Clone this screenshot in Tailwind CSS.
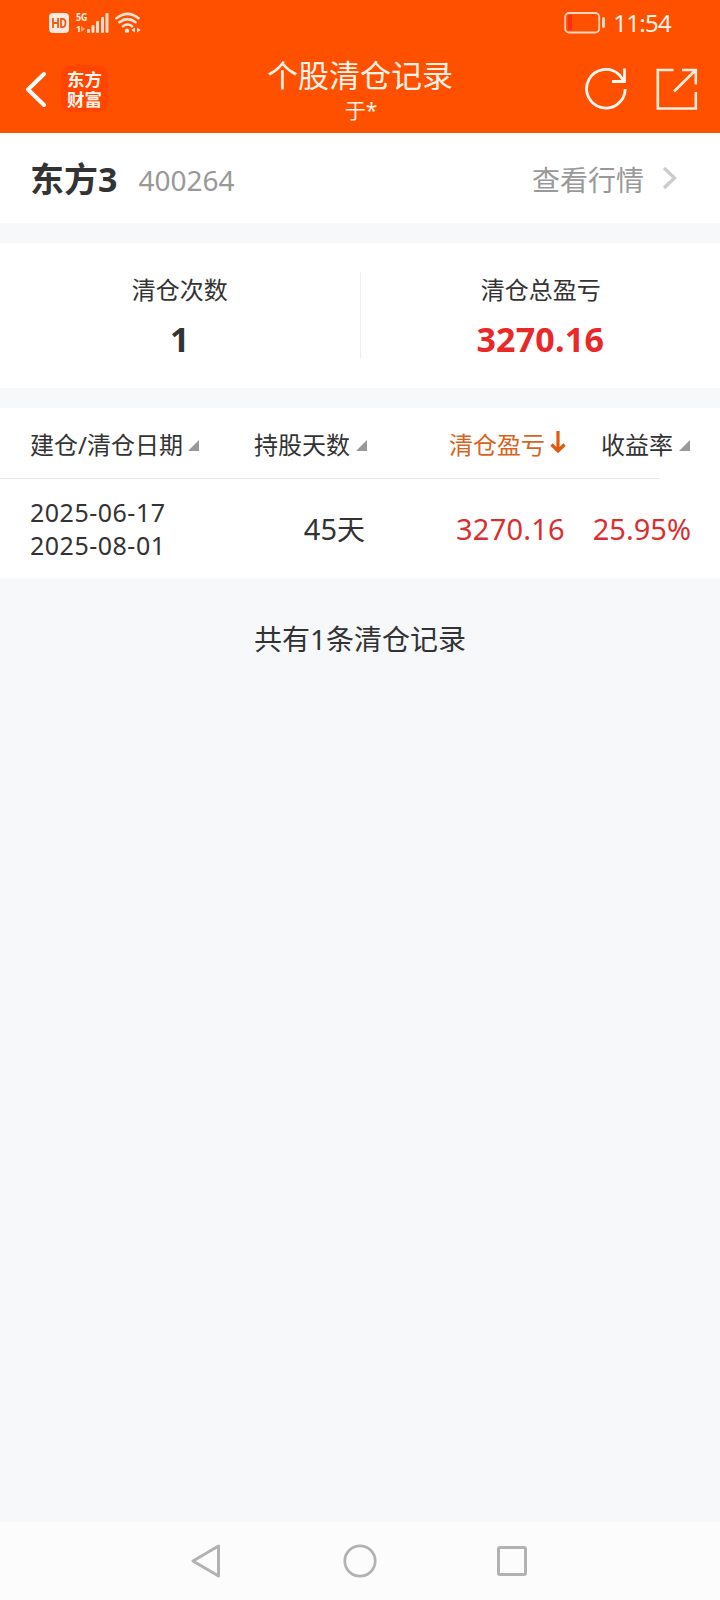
<!DOCTYPE html>
<html lang="zh-CN">
<head>
<meta charset="utf-8">
<title>个股清仓记录</title>
<script src="https://cdn.jsdelivr.net/npm/@tailwindcss/browser@4"></script>
</head>
<body class="bg-[#f7f8fa]">
<div class="flex h-[1600px] w-[720px] flex-col overflow-hidden bg-[#f7f8fa] font-['Noto_Sans','Noto_Sans_CJK_SC',sans-serif] text-[#333] whitespace-nowrap">
  <header class="h-[133px] shrink-0 bg-[#ff5000] text-[#fff3e8]">
    <!-- status bar -->
    <div class="flex h-[45px] items-center justify-between pl-[49px] pr-[49px]">
      <div class="flex h-[22px] items-start">
        <svg class="mt-px" width="20" height="20" viewBox="0 0 20 20"><rect width="20" height="20" rx="4" fill="#ffe9de"/><path d="M4 5v10M9 5v10M4 10h5M12 5.9v8.200h1.300q3.200 0 3.200-4.100t-3.200-4.100z" fill="none" stroke="#ec5b18" stroke-width="1.800"/></svg>
        <div class="ml-[7px] flex w-[11px] flex-col font-bold">
          <span class="-mt-px block h-[12px] origin-left scale-x-[.8] text-[11px] leading-[12px]">5G</span>
          <span class="mt-px flex h-[10px] items-center text-[9px] leading-[10px]">1<svg width="4" height="6" viewBox="0 0 4 6"><path d="M0 0l4 3-4 3z" fill="#ffa27c"/></svg></span>
        </div>
        <svg width="22" height="21" viewBox="0 0 22 21"><g fill="#ffdcca"><rect y="17" width="3" height="4" rx="1"/><rect x="4.500" y="13" width="3" height="8" rx="1"/><rect x="9" y="9" width="3" height="12" rx="1"/><rect x="14" y="5" width="3" height="16" rx="1"/><rect x="18.500" y="1" width="3" height="20" rx="1"/></g></svg>
        <svg class="ml-[6px]" width="26" height="22" viewBox="0 0 26 22"><g fill="none" stroke="#ffe6d9" stroke-width="2.600" stroke-linecap="round"><path d="M1.500 6.200Q12.500-2.500 23.500 6.200M4.500 10.300Q12.500 4 20.500 10.300M8 14.200Q12.500 10.800 17 14.200"/></g><circle cx="12" cy="18.800" r="2.200" fill="#ffe6d9"/><path d="M20 15.500v5l-3.500-2.500zM22 15.500v5l3.500-2.500z" fill="#ffe6d9"/></svg>
      </div>
      <div class="flex items-center">
        <svg width="42" height="22" viewBox="0 0 42 22"><rect x="4" y="3" width="4" height="15" rx="1" fill="#ff2d16"/><rect x="1.200" y="1" width="34" height="19.500" rx="4" fill="none" stroke="#ffd5bd" stroke-width="1.800"/><rect x="38" y="5" width="3" height="11" rx="1.500" fill="#ffd5bd"/></svg>
        <span class="ml-[7px] mt-px text-[24px] leading-[30px] tracking-[-.7px]">11:54</span>
      </div>
    </div>
    <!-- title bar -->
    <div class="grid h-[88px] grid-cols-[240px_240px_1fr]">
      <div class="flex items-start pl-[25px]">
        <svg class="mt-[26px]" width="23" height="37" viewBox="0 0 23 37"><path d="M19 3L3 18.500 19 34" fill="none" stroke="#fff" stroke-width="4" stroke-linecap="round" stroke-linejoin="round"/></svg>
        <div class="ml-[13px] mt-[20px] h-[47px] w-[47px] rounded-[10px] bg-[#ff4500] pt-[4px] text-center text-[17.500px] leading-[19.500px] font-bold text-[#fff5ed] font-['Noto_Sans_CJK_SC',sans-serif]">东方<br>财富</div>
      </div>
      <div class="flex flex-col items-center">
        <h1 class="mt-[12px] text-[31px] leading-[36px]">个股清仓记录</h1>
        <span class="mt-[3px] pl-[2px] text-[21px] leading-[28px]">于*</span>
      </div>
      <div class="flex items-start justify-end pr-[22px]">
        <svg class="mt-[22px]" width="44" height="44" viewBox="0 0 44 44" fill="none" stroke="#fff8f2" stroke-width="2.800"><path d="M41.200 22a19.300 19.300 0 1 1-6-14.200l5 6.500"/><path d="M40.500 1.500v13H28"/></svg>
        <svg class="ml-[28px] mt-[23px]" width="42" height="42" viewBox="0 0 42 42" fill="none" stroke="#ffeddd" stroke-width="2.600"><path d="M17.500 2H1.800v38.500h38V24M26 2h13.800v14.500M39.500 2.300L18 23.500"/></svg>
      </div>
    </div>
  </header>

  <section class="flex h-[90px] shrink-0 items-center bg-white pl-[30px] pr-[42px]">
    <span class="mt-[2px] text-[34px] leading-[44px] font-bold">东方3</span>
    <span class="ml-[21px] mt-[3px] text-[28px] leading-[40px] text-[#999]">400264</span>
    <span class="ml-auto mt-[3px] text-[28px] leading-[40px] text-[#999]">查看行情</span>
    <svg class="ml-[18px]" width="16" height="24" viewBox="0 0 16 24"><path d="M2 2l10.500 10L2 22" fill="none" stroke="#ccc" stroke-width="3.400"/></svg>
  </section>

  <section class="mt-[20px] flex h-[145px] shrink-0 items-center bg-white">
    <div class="flex flex-1 flex-col items-center">
      <span class="mt-[3px] text-[24px] leading-[34px]">清仓次数</span>
      <strong class="mt-[10px] text-[34px] leading-[44px]">1</strong>
    </div>
    <div class="h-[87px] w-px bg-[#eee]"></div>
    <div class="flex flex-1 flex-col items-center">
      <span class="mt-[3px] pl-px text-[24px] leading-[34px]">清仓总盈亏</span>
      <strong class="mt-[10px] text-[34px] leading-[44px] tracking-[.2px] text-[#e92828]">3270.16</strong>
    </div>
  </section>

  <section class="mt-[20px] h-[170px] shrink-0 bg-white">
    <div class="flex h-[70px] items-center pl-[30px] pr-[30px] pt-[3px] text-[24px] leading-[34px]">
      <div class="flex w-[224px] items-center">建仓/清仓日期<svg class="ml-[5px] mt-px" width="11" height="11" viewBox="0 0 11 11"><path d="M11 0v11H0z" fill="#999"/></svg></div>
      <div class="flex w-[195px] items-center">持股天数<svg class="ml-[6px] mt-px" width="11" height="11" viewBox="0 0 11 11"><path d="M11 0v11H0z" fill="#999"/></svg></div>
      <div class="flex items-center text-[#d9631e]">清仓盈亏<svg class="ml-[5px] mt-[-5px]" width="16" height="23" viewBox="0 0 16 23"><path d="M8 0v20M1.500 13.500L8 20l6.500-6.500" fill="none" stroke="#e2580c" stroke-width="3.200"/></svg></div>
      <div class="ml-auto flex items-center">收益率<svg class="ml-[6px] mt-px" width="11" height="11" viewBox="0 0 11 11"><path d="M11 0v11H0z" fill="#999"/></svg></div>
    </div>
    <div class="h-px w-[660px] bg-[#eaeaea]"></div>
    <div class="flex h-[99px] items-center pl-[30px] pr-[29px] pt-px text-[29px] leading-[40px]">
      <div class="flex w-[180px] flex-col text-[25px] leading-[33px] tracking-[.5px]"><span>2025-06-17</span><span>2025-08-01</span></div>
      <div class="flex w-[155px] items-baseline justify-end">45<span class="text-[28px]">天</span></div>
      <span class="ml-auto tracking-[.2px] text-[#d83030]">3270.16</span>
      <span class="ml-[28px] text-[#d83030]">25.95%</span>
    </div>
  </section>

  <p class="mt-[41px] text-center text-[28px] leading-[40px]">共有1条清仓记录</p>

  <!-- system navigation -->
  <nav class="mt-auto flex h-[78px] shrink-0 items-center justify-center gap-[118px] bg-[#fcfcfc]">
    <svg width="34" height="36" viewBox="0 0 34 36"><path d="M27.500 3v30L2 18z" fill="none" stroke="#b2b2b2" stroke-width="3" stroke-linejoin="round"/></svg>
    <svg width="34" height="34" viewBox="0 0 34 34"><circle cx="17" cy="17" r="15.200" fill="none" stroke="#b2b2b2" stroke-width="2.700"/></svg>
    <svg width="34" height="34" viewBox="0 0 34 34"><rect x="3.500" y="3.500" width="27" height="27" rx="1.500" fill="none" stroke="#b2b2b2" stroke-width="3"/></svg>
  </nav>
</div>
</body>
</html>
